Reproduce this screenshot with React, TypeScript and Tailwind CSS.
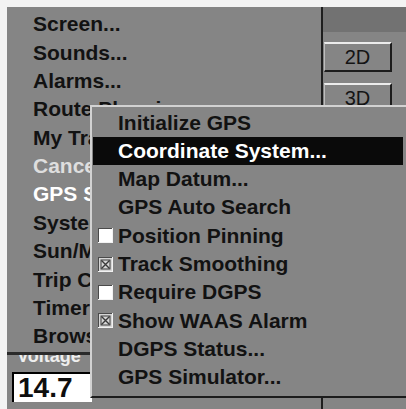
import React from 'react';

const mainItems = [
  { label: 'Screen...' },
  { label: 'Sounds...' },
  { label: 'Alarms...' },
  { label: 'Route Planning...' },
  { label: 'My Trails...' },
  { label: 'Cancel Navigation', disabled: true },
  { label: 'GPS Setup...', open: true },
  { label: 'System Setup...' },
  { label: 'Sun/Moon...' },
  { label: 'Trip Calculator...' },
  { label: 'Timers...' },
  { label: 'Browse...' },
];

type SubItem = { label: string; check?: 'on' | 'off'; selected?: boolean };

const subItems: SubItem[] = [
  { label: 'Initialize GPS' },
  { label: 'Coordinate System...', selected: true },
  { label: 'Map Datum...' },
  { label: 'GPS Auto Search' },
  { label: 'Position Pinning', check: 'off' },
  { label: 'Track Smoothing', check: 'on' },
  { label: 'Require DGPS', check: 'off' },
  { label: 'Show WAAS Alarm', check: 'on' },
  { label: 'DGPS Status...' },
  { label: 'GPS Simulator...' },
];

function CheckBox({ checked }: { checked: boolean }) {
  return (
    <svg width="15" height="15" viewBox="0 0 15 15" className="shrink-0">
      <rect x="0" y="0" width="15" height="15" fill="#f2f2f2" />
      <rect x="0" y="0" width="14" height="14" fill="#4a4a4a" />
      <rect x="1" y="1" width="13" height="13" fill={checked ? '#d6d6d6' : '#ffffff'} />
      {checked && (
        <g stroke="#3a3a3a" strokeWidth="1.4" fill="none">
          <rect x="3" y="3" width="9" height="9" strokeWidth="1" />
          <path d="M3.5 3.5 L11.5 11.5 M11.5 3.5 L3.5 11.5" />
        </g>
      )}
    </svg>
  );
}

function BevelButton({ label }: { label: string }) {
  return (
    <div className="ml-[1px] h-[30px] w-[68px] border-t-2 border-l border-b-2 border-r-2 border-t-[#ececec] border-l-[#bdbdbd] border-b-[#1c1c1c] border-r-[#1c1c1c] bg-[#858585] flex items-center justify-center text-[20px] leading-none text-[#141414]">
      {label}
    </div>
  );
}

function SubMenu() {
  return (
    <div className="absolute left-[90px] top-[105px] right-0 h-[293px] bg-[#858585] border-t-2 border-l-2 border-b-2 border-t-[#d2d2d2] border-l-[#d2d2d2] border-b-[#1c1c1c] pt-[1.5px] pr-[3px]">
      {subItems.map((item) => (
        <div
          key={item.label}
          className={`ml-[1px] h-[28.3px] flex items-center pl-[5px] gap-[5px] ${
            item.selected ? 'bg-[#0a0a0a] text-white' : 'text-[#121212]'
          }`}
        >
          {item.check ? <CheckBox checked={item.check === 'on'} /> : <span className="w-[15px] shrink-0" />}
          <span className="text-[21px] font-bold leading-[28.3px] whitespace-nowrap">{item.label}</span>
        </div>
      ))}
    </div>
  );
}

export default function App() {
  return (
    <div className="relative w-[406px] h-[409px] overflow-hidden bg-[#f3f3f3] pt-[7px] pl-[7px] font-['Liberation_Sans',Arial,sans-serif]">
      <div className="flex h-[402px] bg-[#858585]">
        {/* left menu */}
        <div className="w-[314px] flex flex-col">
          <div className="pt-[3.3px] pl-[26px]">
            {mainItems.map((item) => (
              <div
                key={item.label}
                className={`h-[28.36px] text-[21px] font-bold leading-[28.36px] whitespace-nowrap ${
                  item.disabled ? 'text-[#dedede]' : item.open ? 'text-white' : 'text-[#121212]'
                }`}
              >
                {item.label}
              </div>
            ))}
          </div>
          <div className="mt-[1.5px] h-[3px] w-[90px] bg-[#2a2a2a]" />
          <div className="h-[14px] overflow-hidden pl-[10px]">
            <div className="-mt-[8px] text-[18px] font-bold leading-[18px] text-[#eeeeee]">Voltage</div>
          </div>
          <div className="mt-[3px] ml-[5px] h-[30px] w-[80px] bg-white border-t-2 border-l-2 border-black flex items-center pl-[4px]">
            <span className="text-[28px] font-bold leading-none text-[#0e0e0e]">14.7</span>
          </div>
        </div>

        {/* divider */}
        <div className="w-[2px] bg-[#1e1e1e]" />

        {/* right panel */}
        <div className="flex-1 flex flex-col">
          <div className="h-[25px] bg-[#727272]" />
          <div className="mt-[10px]">
            <BevelButton label="2D" />
          </div>
          <div className="mt-[11px]">
            <BevelButton label="3D" />
          </div>
        </div>
      </div>

      <SubMenu />
    </div>
  );
}
